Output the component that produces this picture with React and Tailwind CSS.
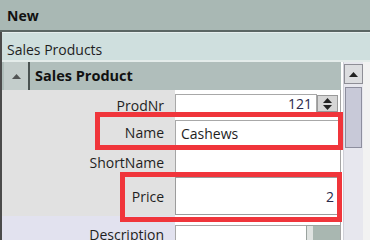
const font = { fontFamily: '"Open Sans", "Noto Sans", sans-serif' };

function UpArrow({ className }) {
  return (
    <svg width="9" height="5" viewBox="0 0 9 5" className={className}>
      <path d="M0 5 L4.5 0 L9 5 Z" fill="#222" />
    </svg>
  );
}

function DownArrow({ className }) {
  return (
    <svg width="9" height="5" viewBox="0 0 9 5" className={className}>
      <path d="M0 0 L4.5 5 L9 0 Z" fill="#222" />
    </svg>
  );
}

function Label({ children, className = "" }) {
  return (
    <div className={`w-[173px] flex items-center justify-end pr-[11px] text-[14px] text-[#1e1e1e] ${className}`}>
      {children}
    </div>
  );
}

export default function App() {
  return (
    <div className="relative w-[370px] h-[240px] overflow-hidden bg-[#f0f0f0]" style={font}>
      <div className="h-[32px] bg-[#a9b8b4] border-b-2 border-[#5b6664] flex items-center pl-[7px]">
        <span className="text-[14px] font-bold text-[#111]">New</span>
      </div>

      <div className="flex flex-col h-[208px] border-l-2 border-[#4b4b4b]">
        <div className="h-[28px] bg-[#cfdfde] border-t border-[#e6eeee] flex items-center pl-[5px] shrink-0">
          <span className="text-[14px] text-[#1e1e1e] mt-[6px]">Sales Products</span>
        </div>

        <div className="flex flex-1 border-t-2 border-[#e4ecea]">
          <div className="w-[339px] flex flex-col">
            <div className="h-[28px] bg-[#b0bebb] flex items-center shrink-0">
              <div className="w-[26px] h-full ml-[2px] bg-[#c3cdcb] border-r-2 border-[#4a5352] flex items-center justify-center">
                <UpArrow className="opacity-70" />
              </div>
              <span className="ml-[5px] text-[14.5px] font-bold text-[#111]">Sales Product</span>
            </div>

            <div className="flex h-[27px] shrink-0">
              <Label className="bg-[#e1e1e1] pt-[3px]">ProdNr</Label>
              <div className="flex-1 bg-white border-r border-[#a5a5a5] flex items-center">
                <div className="flex-1 h-[19px] border border-[#a8a8a8] flex items-center justify-end pr-[4px] text-[14px] text-[#2a2a4a]">121</div>
                <div className="w-[21px] h-[17px] mr-[2px] flex flex-col items-center justify-center gap-[2px] bg-[#d6d6d6] border border-[#9a9a9a]">
                  <UpArrow />
                  <DownArrow />
                </div>
              </div>
            </div>

            <div className="flex h-[31px] shrink-0">
              <Label className="bg-[#e1e1e1]">Name</Label>
              <div className="flex-1 bg-white border-r border-[#a5a5a5] flex items-center">
                <div className="flex-1 h-[26px] border-l border-t border-[#a8a8a8] flex items-center pl-[5px] text-[14px] text-[#1e1e1e]">Cashews</div>
              </div>
            </div>

            <div className="flex h-[28px] shrink-0">
              <Label className="bg-[#e1e1e1]">ShortName</Label>
              <div className="flex-1 bg-white border-l border-r border-[#a5a5a5]" />
            </div>

            <div className="flex h-[40px] shrink-0">
              <Label className="bg-[#e1e1e1]">Price</Label>
              <div className="flex-1 bg-white border-r border-[#a5a5a5] flex items-center">
                <div className="flex-1 h-[38px] border-l border-t border-b border-[#9c9c9c] flex items-center justify-end pr-[6px] text-[14px] text-[#2a2a4a]">2</div>
              </div>
            </div>

            <div className="flex flex-1">
              <Label className="bg-[#e2e2ef] items-start pt-[8px]">Description</Label>
              <div className="flex-1 bg-white border-r border-[#a5a5a5] flex flex-col">
                <div className="flex-1 flex mt-[9px]">
                  <div className="flex-1 border-l border-t border-[#a8a8a8]" />
                  <div className="w-[34px] border-l border-t border-[#9aa39f] bg-[#dfe3e1] pl-[6px]">
                    <div className="h-full bg-[#a9b7b1]" />
                  </div>
                </div>
              </div>
            </div>
          </div>

          <div className="w-[2px] bg-white" />

          <div className="w-[20px] bg-[#e7e7ee] flex flex-col pt-[2px] border-l border-[#d0d0d8]">
            <div className="h-[20px] bg-[#dcdde0] border border-[#8e8e96] flex items-center justify-center">
              <UpArrow />
            </div>
            <div className="h-[61px] mt-[3px] mx-[1px] bg-[#c8c9d8] border border-[#8d8e9e]" />
          </div>
          <div className="flex-1 bg-[#f2f2f2]" />
        </div>
      </div>

      <div className="absolute left-[95px] top-[112px] w-[248px] h-[38px] border-[5px] border-[#f0353b]" />
      <div className="absolute left-[120px] top-[172px] w-[222px] h-[50px] border-[5px] border-[#f0353b]" />
    </div>
  );
}
